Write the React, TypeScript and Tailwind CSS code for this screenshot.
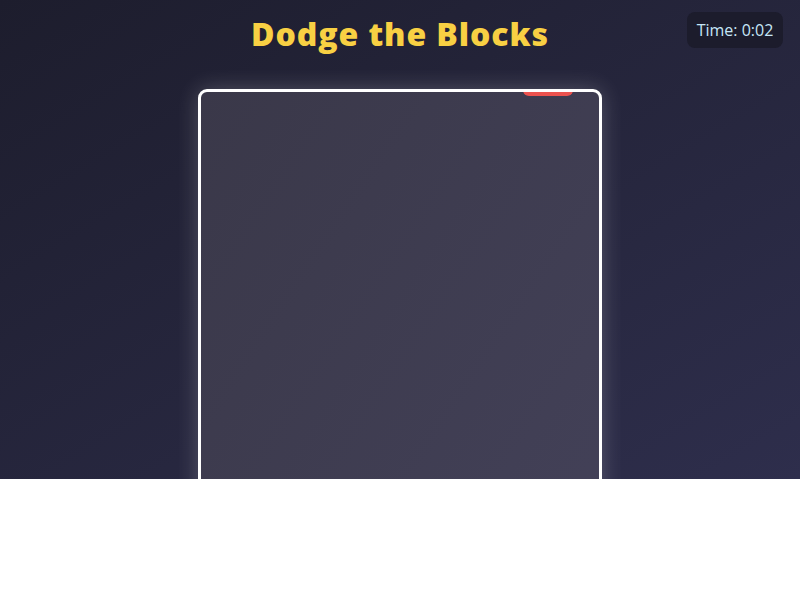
import React from "react";

const FONT = { fontFamily: '"Open Sans", "Noto Sans", sans-serif' };

export default function App() {
  return (
    <div className="bg-white" style={FONT}>
      <div className="relative flex h-[479px] flex-col items-center overflow-hidden bg-gradient-to-br from-[#1d1d2d] to-[#2e2e4c]">
        <h1 className="mt-[11px] text-[32px] font-extrabold leading-[46px] tracking-[0.9px] text-[#f8d043]">
          Dodge the Blocks
        </h1>

        <div className="absolute right-[17px] top-[12px] flex h-9 w-24 items-center justify-center rounded-lg bg-[#1c1c2c] text-[16px] text-[#c6e6f7]">
          Time: 0:02
        </div>

        <div className="relative mt-[32px] h-[600px] w-[404px] shrink-0 overflow-hidden rounded-[9px] border-[3px] border-white bg-gradient-to-br from-[#3a3849] to-[#44425a] shadow-[0_0_22px_rgba(255,255,255,0.22)]">
          <div className="absolute left-[322px] top-[-46px] h-[50px] w-[50px] rounded-md bg-[#ec524e]" />
        </div>
      </div>
    </div>
  );
}
